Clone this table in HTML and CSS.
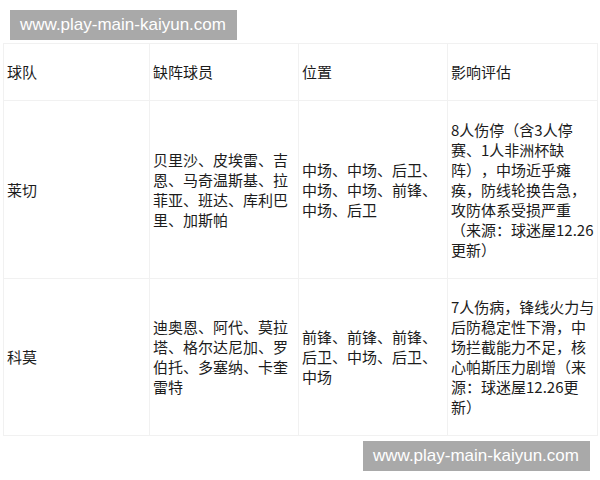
FILE: index.html
```html
<!DOCTYPE html>
<html lang="zh-CN">
<head>
<meta charset="utf-8">
<link rel="stylesheet" href="styles.css">
</head>
<body>
<div class="page">
  <div class="mark mark-top">www.play-main-kaiyun.com</div>
  <table class="grid">
    <colgroup>
      <col class="c1"><col class="c2"><col class="c3"><col class="c4">
    </colgroup>
    <tr class="head">
      <td>球队</td>
      <td>缺阵球员</td>
      <td>位置</td>
      <td>影响评估</td>
    </tr>
    <tr class="r1">
      <td>莱切</td>
      <td>贝里沙、皮埃雷、吉恩、马奇温斯基、拉菲亚、班达、库利巴里、加斯帕</td>
      <td>中场、中场、后卫、中场、中场、前锋、中场、后卫</td>
      <td>8人伤停（含3人停赛、1人非洲杯缺阵），中场近乎瘫痪，防线轮换告急，攻防体系受损严重（来源：球迷屋12.26更新）</td>
    </tr>
    <tr class="r2">
      <td>科莫</td>
      <td>迪奥恩、阿代、莫拉塔、格尔达尼加、罗伯托、多塞纳、卡奎雷特</td>
      <td>前锋、前锋、前锋、后卫、中场、后卫、中场</td>
      <td>7人伤病，锋线火力与后防稳定性下滑，中场拦截能力不足，核心帕斯压力剧增（来源：球迷屋12.26更新）</td>
    </tr>
  </table>
  <div class="mark mark-bottom">www.play-main-kaiyun.com</div>
</div>
</body>
</html>
```

FILE: styles.css
```css
html, body {
  margin: 0;
  padding: 0;
  background: #ffffff;
}
.page {
  width: 600px;
  height: 480px;
  display: flex;
  flex-direction: column;
  overflow: hidden;
}
.mark {
  background: #a9a9a9;
  color: #ffffff;
  font-family: "Liberation Sans", Arial, sans-serif;
  font-size: 17px;
  line-height: 30px;
  height: 30px;
  padding: 0 10px;
  white-space: nowrap;
  box-sizing: border-box;
  width: 227px;
}
.mark-top {
  margin: 10px 0 0 10px;
}
.mark-bottom {
  align-self: flex-end;
  margin: 5px 10px 0 0;
}
.grid {
  margin: 3px 0 0 3px;
  width: 594px;
  table-layout: fixed;
  border-collapse: collapse;
  font-family: "Noto Sans CJK SC", "Noto Sans", sans-serif;
  font-size: 15px;
  line-height: 20px;
  color: #1c1c1c;
  text-spacing-trim: space-all;
}
.c1 { width: 146px; }
.c2 { width: 149px; }
.c3 { width: 149px; }
.c4 { width: 150px; }
.grid td {
  border: 1px solid #f1f1f1;
  padding: 0 0 0 3px;
  vertical-align: middle;
  word-break: normal;
}
.head td { height: 56px; }
.r1 td { height: 177px; }
.r2 td { height: 156px; }
```
